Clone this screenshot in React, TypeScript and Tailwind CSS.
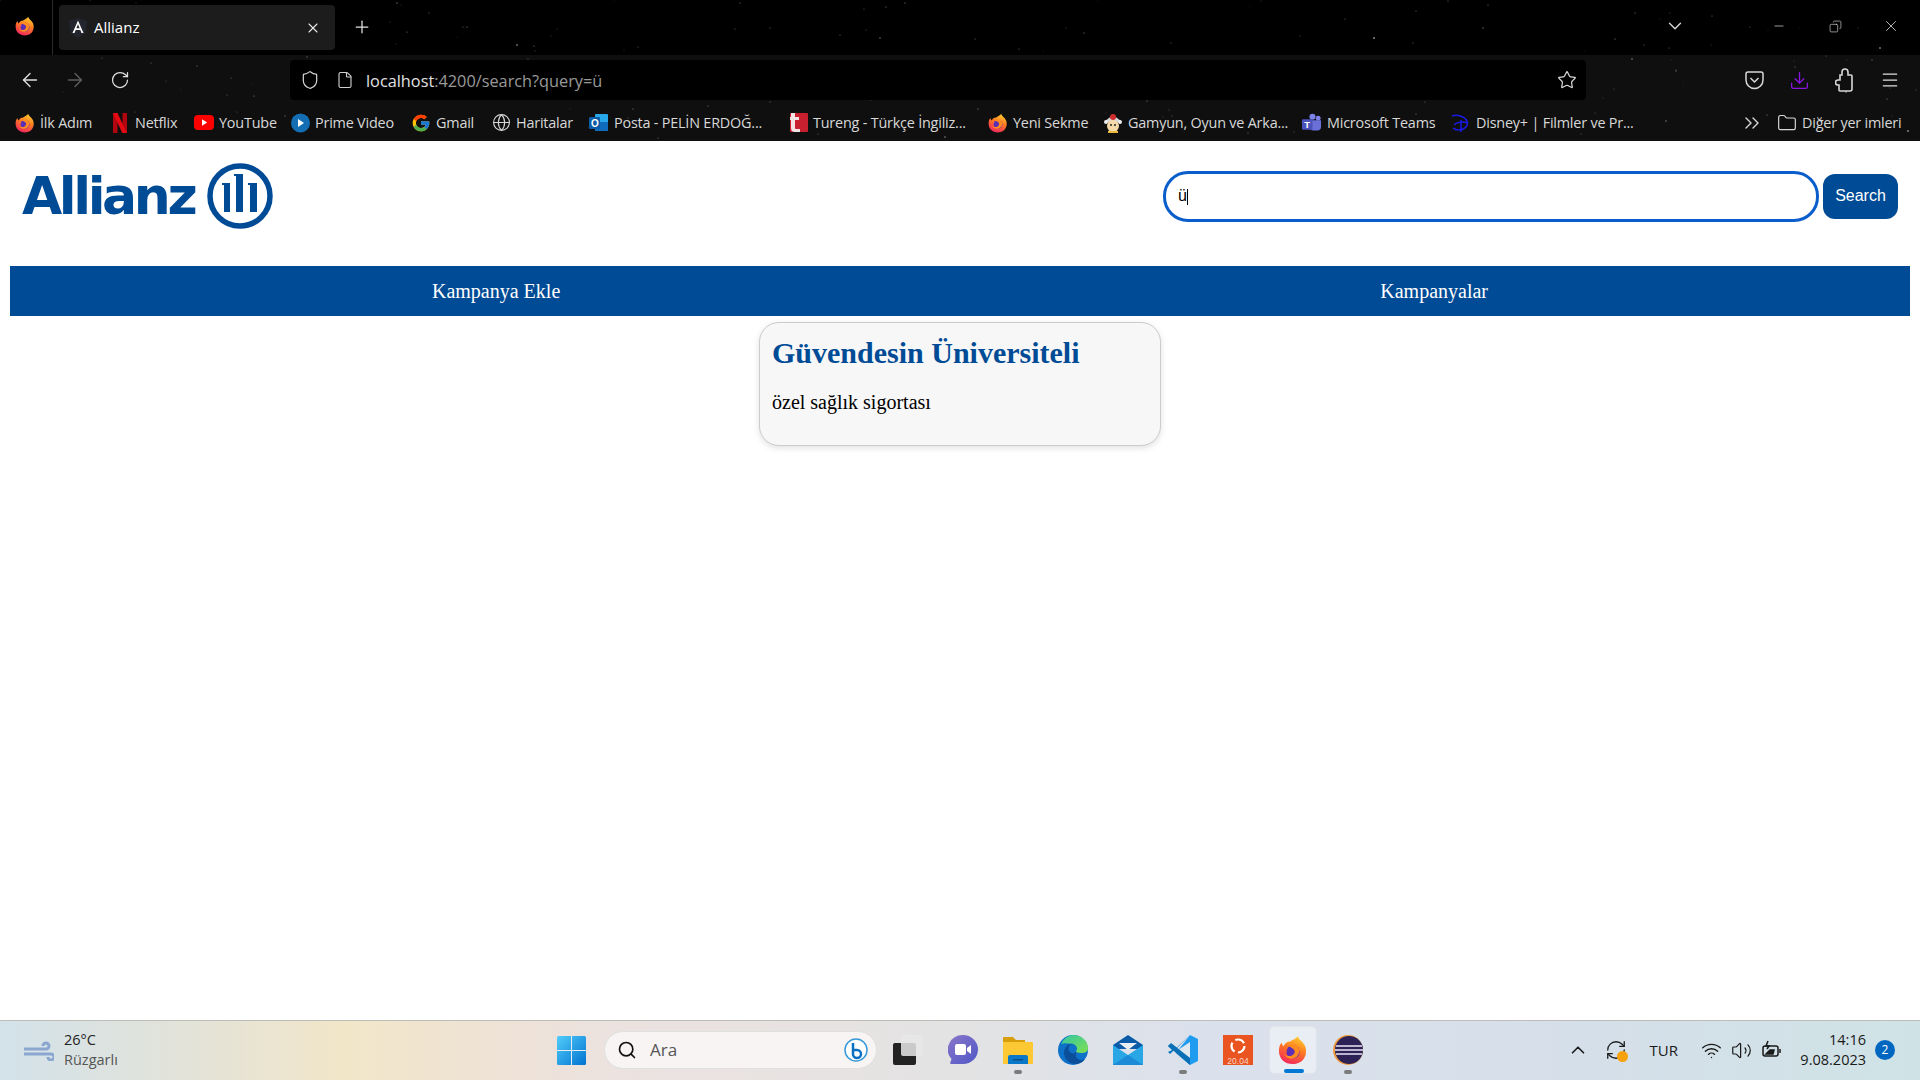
import React from 'react';
import { FcGoogle } from 'react-icons/fc';
import { RotateCw, ArrowLeft, ArrowRight, Shield, File, Star, Download, Menu, ChevronDown, ChevronsRight, ChevronUp, Folder, Globe, Plus, X, Minus, Copy, Search, Wifi, Volume2, RefreshCw } from 'lucide-react';

const sans = "font-['Open_Sans','Noto_Sans',sans-serif]";

const FirefoxIcon = ({ size = 20 }: { size?: number }) => (
    <svg width={size} height={size} viewBox="0 0 32 32">
        <defs>
            <linearGradient id="ffBody" x1="0.7" y1="0" x2="0.3" y2="1">
                <stop offset="0" stopColor="#ffcf2e" />
                <stop offset="0.45" stopColor="#ff7a22" />
                <stop offset="1" stopColor="#f0245f" />
            </linearGradient>
        </defs>
        <path d="M21 1c1 4 6 6 8 11 3 8-1 19-13 19C7 31 1 25 1 17c0-4 1-7 3-9 0 2 1 3 2 4 1-3 4-5 7-5 2-2 7-3 8-6z" fill="url(#ffBody)" />
        <circle cx="16" cy="18" r="7" fill="#5a2fb5" />
        <path d="M11 11c4-2 9-1 11 3 2 5-1 10-6 11-4 1-8-1-10-5 3 3 8 3 10 1 3-2 2-6-1-7-2-1-3-2-4-3z" fill="#ff8a1f" />
    </svg>
);

const Tureng = () => (
    <svg width="19" height="19" viewBox="0 0 19 19">
        <rect x="1" width="18" height="19" rx="1" fill="#c8202f" />
        <path d="M2 0h4v4h4v3H6v8c0 1 1 1 2 1h3v3H6c-2 0-4-1-4-4V7H1V4h1z" fill="#f3e3e5" />
    </svg>
);

const Outlook = () => (
    <svg width="20" height="20" viewBox="0 0 20 20">
        <rect x="6" y="1" width="13" height="17" rx="1" fill="#28a8ea" />
        <rect x="6" y="9" width="13" height="9" fill="#0f6cbd" />
        <rect x="0" y="4" width="11" height="12" rx="1" fill="#0a5ba8" />
        <text x="2" y="14" fontSize="10" fontFamily="Liberation Sans" fontWeight="bold" fill="#fff">O</text>
    </svg>
);

const Teams = () => (
    <svg width="21" height="20" viewBox="0 0 21 20">
        <circle cx="17" cy="5" r="2.6" fill="#7b83eb" />
        <circle cx="11" cy="3.5" r="3.2" fill="#7b83eb" />
        <path d="M8 7h12v7a4 4 0 0 1-4 4h-4a4 4 0 0 1-4-4z" fill="#6a70d8" />
        <rect x="0" y="6" width="11" height="11" rx="1" fill="#4b53bc" />
        <text x="2.3" y="15" fontSize="10" fontFamily="Liberation Sans" fontWeight="bold" fill="#fff">T</text>
    </svg>
);

const Disney = () => (
    <svg width="20" height="20" viewBox="0 0 20 20" fill="none" stroke="#1a1ae8" strokeWidth="1.5">
        <path d="M1 3c6-2 13 1 15 5 2 5-3 9-8 9-3 0-5-1-6-2" />
        <path d="M3 12c3-3 9-4 14-2" />
        <path d="M10 7v12" />
    </svg>
);

const Gamyun = () => (
    <svg width="20" height="20" viewBox="0 0 20 20">
        <path d="M2 8l8-6 8 6-8 3z" fill="#d9d9d9" />
        <circle cx="10" cy="4" r="3" fill="#d02c2c" />
        <circle cx="3" cy="9" r="2" fill="#eee" />
        <circle cx="17" cy="9" r="2" fill="#eee" />
        <circle cx="10" cy="13" r="6" fill="#f6d9a8" />
        <circle cx="8" cy="12" r="1" fill="#222" />
        <circle cx="12" cy="12" r="1" fill="#222" />
        <path d="M5 18h10v2H5z" fill="#e8b93a" />
    </svg>
);

const bookmarks: { label: string; width: number; icon: React.ReactNode }[] = [
    { label: 'İlk Adım', width: 95, icon: <FirefoxIcon /> },
    {
        label: 'Netflix',
        width: 84,
        icon: (
            <svg width="14" height="20" viewBox="0 0 14 20">
                <path d="M0 0h4.5v20L0 20.5z" fill="#b1060f" />
                <path d="M9.5 0H14v20.5L9.5 20z" fill="#b1060f" />
                <path d="M0 0h4.5L14 20.5H9.5z" fill="#e50914" />
            </svg>
        ),
    },
    {
        label: 'YouTube',
        width: 96,
        icon: (
            <svg width="20" height="15" viewBox="0 0 20 15">
                <rect width="20" height="15" rx="4" fill="#f00" />
                <path d="M8 4.2l5.2 3.3L8 10.800z" fill="#fff" />
            </svg>
        ),
    },
    {
        label: 'Prime Video',
        width: 121,
        icon: (
            <svg width="19" height="20" viewBox="0 0 19 20">
                <circle cx="9.500" cy="10" r="9.500" fill="#146eb4" />
                <path d="M7 6l6 4-6 4z" fill="#fff" />
            </svg>
        ),
    },
    { label: 'Gmail', width: 80, icon: <FcGoogle size={20} /> },
    { label: 'Haritalar', width: 98, icon: <Globe size={19} strokeWidth={1.4} className="text-[#d5d5d5]" /> },
    { label: 'Posta - PELİN ERDOĞ...', width: 199, icon: <Outlook /> },
    { label: 'Tureng - Türkçe İngiliz...', width: 200, icon: <Tureng /> },
    { label: 'Yeni Sekme', width: 115, icon: <FirefoxIcon /> },
    { label: 'Gamyun, Oyun ve Arka...', width: 199, icon: <Gamyun /> },
    { label: 'Microsoft Teams', width: 149, icon: <Teams /> },
    { label: 'Disney+ | Filmler ve Pr...', width: 200, icon: <Disney /> },
];

// speckled firefox theme background
const stars = Array.from({ length: 170 }, (_, i) => ({
    x: (i * 733 + ((i * i * 37) % 211)) % 1920,
    y: (i * 89 + ((i * i * 13) % 97)) % 141,
    o: 0.12 + ((i * 17) % 10) / 22,
    r: i % 9 === 0 ? 1 : 0.6,
}));

const AllianzEmblem = () => (
    <svg width="66" height="66" viewBox="0 0 66 66" fill="#004b95">
        <circle cx="33" cy="33" r="30" fill="none" stroke="#004b95" strokeWidth="5.500" />
        <path d="M15 20h8v29h-6V22h-2z" />
        <path d="M27 11h9v38h-7V13h-2z" />
        <path d="M41 20h9v29h-7V22h-2z" />
    </svg>
);

const WindowsLogo = () => (
    <svg width="29" height="29" viewBox="0 0 29 29">
        <defs>
            <linearGradient id="winLogo" x1="0" y1="0" x2="1" y2="1">
                <stop offset="0" stopColor="#52cdfb" />
                <stop offset="1" stopColor="#0072d0" />
            </linearGradient>
        </defs>
        <rect width="29" height="29" rx="1.500" fill="url(#winLogo)" />
        <path d="M14.500 0v29M0 14.500h29" stroke="#e6ecf0" strokeWidth="1" />
    </svg>
);

const TaskView = () => (
    <svg width="30" height="30" viewBox="0 0 30 30">
        <rect x="0" y="8" width="23" height="22" rx="2" fill="#222" />
        <rect x="8" y="0" width="22" height="21" rx="2" fill="#e8e8e8" opacity="0.85" />
    </svg>
);

const ChatIcon = () => (
    <svg width="30" height="30" viewBox="0 0 30 30">
        <defs>
            <linearGradient id="chatG" x1="0" y1="0" x2="1" y2="1">
                <stop offset="0" stopColor="#8a76c9" />
                <stop offset="1" stopColor="#4f58c7" />
            </linearGradient>
        </defs>
        <path d="M15 0a15 14.500 0 0 1 0 29H3c-1 0-1-1-.5-2l1-3A15 14.500 0 0 1 15 0z" fill="url(#chatG)" />
        <rect x="7" y="9" width="11" height="11" rx="2" fill="#fff" />
        <path d="M19 13l4-3v9l-4-3z" fill="#fff" />
    </svg>
);

const FolderIcon = () => (
    <svg width="30" height="30" viewBox="0 0 30 30">
        <path d="M0 3a1 1 0 0 1 1-1h9l3 3h9v4H0z" fill="#d99e0b" />
        <path d="M0 7h29a1 1 0 0 1 1 1v20a1 1 0 0 1-1 1H1a1 1 0 0 1-1-1z" fill="#fcc934" />
        <path d="M5 22a2 2 0 0 1 2-2h16a2 2 0 0 1 2 2v7H5z" fill="#0a78c9" />
        <rect x="10" y="24" width="10" height="1.500" fill="#0b4f8a" />
    </svg>
);

const EdgeIcon = () => (
    <svg width="30" height="30" viewBox="0 0 30 30">
        <defs>
            <linearGradient id="edgeG" x1="0" y1="0" x2="1" y2="1">
                <stop offset="0" stopColor="#33c6a5" />
                <stop offset="1" stopColor="#7fe04f" />
            </linearGradient>
        </defs>
        <circle cx="15" cy="15" r="15" fill="#0f72c9" />
        <path d="M3 9C6 3 11 0 15 0c9 0 15 6 15 13 0 4-3 5-7 5-3 0-5-1-5-2 2-2 1-6-3-7C10 8 5 8 3 9z" fill="url(#edgeG)" />
        <path d="M18 16c0 3-4 3-6 1-3-3-1-8 3-8-4-1-9 3-9 9 0 6 6 12 13 11 4-1 7-3 8-5-3 2-7 1-9-2z" fill="#0b4f9a" />
    </svg>
);

const MailIcon = () => (
    <svg width="30" height="30" viewBox="0 0 30 30">
        <path d="M0 10L15 0l15 10v4H0z" fill="#0a5aa8" />
        <path d="M6 8h18l-9 7z" fill="#e8eef4" />
        <path d="M0 10l15 10 15-10v20H0z" fill="#29a6e6" />
        <path d="M0 30l15-10 15 10z" fill="#1c8ad6" />
    </svg>
);

const VsCode = () => (
    <svg width="30" height="30" viewBox="0 0 30 30">
        <path d="M22 0l8 4v22l-8 4-14-12z" fill="#1f9cf0" />
        <path d="M22 7v16L10 15z" fill="#e1e7ef" />
        <path d="M22 0L2 19l-2-2 4-2-4-4 3-2 6 4z" fill="#0a78c4" />
        <path d="M3 8l19 15v7L0 11z" fill="#0a6fb5" />
    </svg>
);

const UbuntuIcon = () => (
    <svg width="30" height="30" viewBox="0 0 30 30">
        <rect width="30" height="30" fill="#e95420" />
        <circle cx="15" cy="11" r="6.500" fill="none" stroke="#fff" strokeWidth="2.200" strokeDasharray="10 3.500" />
        <text x="15" y="28.500" textAnchor="middle" fontSize="8.500" fontFamily="Liberation Sans" fill="#f7d7cb">20.04</text>
    </svg>
);

const EclipseIcon = () => (
    <svg width="30" height="30" viewBox="0 0 30 30">
        <circle cx="15" cy="15" r="15" fill="#f09a3e" />
        <circle cx="16" cy="15" r="14" fill="#2c2255" />
        <path d="M3 11h26M2 15h28M3 19h26" stroke="#e9e5f4" strokeWidth="1.600" />
    </svg>
);

const taskbarItems: { id: string; icon: React.ReactNode; dot?: boolean; active?: boolean }[] = [
    { id: 'taskview', icon: <TaskView /> },
    { id: 'chat', icon: <ChatIcon /> },
    { id: 'files', icon: <FolderIcon />, dot: true },
    { id: 'edge', icon: <EdgeIcon /> },
    { id: 'mail', icon: <MailIcon /> },
    { id: 'vscode', icon: <VsCode />, dot: true },
    { id: 'ubuntu', icon: <UbuntuIcon /> },
    { id: 'firefox', icon: <FirefoxIcon size={30} />, active: true },
    { id: 'eclipse', icon: <EclipseIcon />, dot: true },
];

const App: React.FC = () => {
    return (
        <div className="w-[1920px] h-[1080px] flex flex-col overflow-hidden bg-white">
            {/* Browser chrome */}
            <div className={`relative shrink-0 bg-black ${sans}`}>
                <svg className="absolute inset-0 pointer-events-none" width="1920" height="141">
                    <rect y="55" width="1920" height="86" fill="#0f0f0f" />
                    {stars.map((s, i) => (
                        <circle key={i} cx={s.x} cy={s.y} r={s.r} fill="#fff" opacity={s.o} />
                    ))}
                </svg>

                {/* Tab strip */}
                <div className="relative h-[55px] flex items-start text-[#e4e4e4]">
                    <div className="w-[53px] h-[55px] flex items-center justify-center border-r border-[#2a2a2a] pb-[4px] pr-[3px]">
                        <FirefoxIcon />
                    </div>
                    <div className="ml-[6px] mt-[5px] w-[276px] h-[45px] bg-[#1c1c1c] rounded-[4px] flex items-center pl-[10px] pr-[14px]">
                        <svg width="18" height="20" viewBox="0 0 18 20">
                            <path d="M9 0L0 3l1.500 12L9 20l7.500-5L18 3z" fill="#23262e" />
                            <path d="M9 2.500L3.500 15h2L6.700 12h4.600l1.200 3h2zM7.400 10.300L9 6.300l1.600 4z" fill="#fff" />
                        </svg>
                        <span className="ml-[7px] text-[15px] text-white flex-1">Allianz</span>
                        <X size={16} strokeWidth={1.6} className="text-[#e8e8e8]" />
                    </div>
                    <div className="ml-[17px] mt-[17px]">
                        <Plus size={20} strokeWidth={1.5} />
                    </div>
                    <div className="ml-auto flex items-center h-[52px] text-[#d8d8d8]">
                        <ChevronDown size={22} strokeWidth={1.5} />
                        <Minus size={14} strokeWidth={1.2} className="ml-[86px]" />
                        <Copy size={13} strokeWidth={1.2} className="ml-[43px] -scale-x-100" />
                        <X size={18} strokeWidth={1.1} className="ml-[40px] mr-[20px]" />
                    </div>
                </div>

                {/* Nav toolbar */}
                <div className="relative h-[45px] flex items-start text-[#e0e0e0]">
                    <div className="w-[290px] h-[50px] flex items-center pl-[19px]">
                        <ArrowLeft size={22} strokeWidth={1.5} />
                        <ArrowRight size={22} strokeWidth={1.5} className="ml-[23px] text-[#5f5f5f]" />
                        <RotateCw size={20} strokeWidth={1.5} className="ml-[24px]" />
                    </div>
                    <div className="mt-[5px] w-[1296px] h-[40px] bg-black rounded-[4px] flex items-center pl-[10px] pr-[9px]">
                        <Shield size={20} strokeWidth={1.5} className="text-[#d0d0d0]" />
                        <File size={18} strokeWidth={1.5} className="ml-[16px] text-[#d0d0d0]" />
                        <span className="ml-[12px] mt-[3px] text-[16.3px] text-[#e2e2e2]">
                            localhost<span className="text-[#9a9a9a]">:4200/search?query=ü</span>
                        </span>
                        <Star size={20} strokeWidth={1.5} className="ml-auto text-[#d8d8d8]" />
                    </div>
                    <div className="flex items-center h-[50px] pl-[159px]">
                        <svg width="19" height="20" viewBox="0 0 19 20" fill="none" stroke="#d8d8d8" strokeWidth="1.500">
                            <path d="M1 4a2 2 0 0 1 2-2h13a2 2 0 0 1 2 2v6a8.500 8.500 0 0 1-17 0z" />
                            <path d="M5.500 8l4 4 4-4" />
                        </svg>
                        <Download size={21} strokeWidth={1.5} className="ml-[25px] text-[#8a14e0]" />
                        <svg className="ml-[25px]" width="18" height="24" viewBox="0 0 18 24" fill="none" stroke="#d8d8d8" strokeWidth="1.600">
                            <path d="M5 23h10a2 2 0 0 0 2-2V8a1 1 0 0 0-1-1h-3V4a3 3 0 0 0-6 0v3H5v5H3a2.500 2.500 0 0 0 0 5h1v5a1 1 0 0 0 1 1z" />
                        </svg>
                        <Menu size={20} strokeWidth={1.5} className="ml-[27px]" />
                    </div>
                </div>

                {/* Bookmarks bar */}
                <div className="relative h-[41px] flex items-center pl-[15px] text-[14.4px] text-[#d8d8d8] pt-[5px]">
                    {bookmarks.map((b) => (
                        <div key={b.label} style={{ width: b.width }} className="flex items-center gap-[5px] shrink-0 whitespace-nowrap tracking-[-0.2px]">
                            <div className="w-[20px] flex justify-center shrink-0">{b.icon}</div>
                            <span>{b.label}</span>
                        </div>
                    ))}
                    <ChevronsRight size={24} strokeWidth={1.4} className="ml-[89px]" />
                    <Folder size={20} strokeWidth={1.4} className="ml-[13px]" />
                    <span className="ml-[5px] whitespace-nowrap tracking-[-0.2px]">Diğer yer imleri</span>
                </div>
            </div>

            {/* Page */}
            <div className="flex-1 px-[10px] font-['Liberation_Serif',serif]">
                <header className="h-[125px] flex items-center justify-between pb-[15px] pr-[12px]">
                    <div className="flex items-center pl-[12px]">
                        <span className="font-['DejaVu_Sans',sans-serif] font-bold text-[52px] leading-none text-[#004b95] tracking-[-3.400px]">Allianz</span>
                        <div className="ml-[13px]">
                            <AllianzEmblem />
                        </div>
                    </div>
                    <div className="flex items-center gap-[4px]">
                        <div className="relative">
                            <input
                                readOnly
                                value="ü"
                                className="w-[656px] h-[51px] rounded-[25px] border-[3px] border-[#0a5ecb] pl-[12px] outline-none text-[16px] text-black font-['Liberation_Sans',sans-serif]"
                            />
                            <div className="absolute left-[24px] top-[18px] w-px h-[16px] bg-black" />
                        </div>
                        <button className="w-[75px] h-[45px] rounded-[12px] bg-[#004b95] text-white text-[16px] font-['Liberation_Sans',sans-serif]">Search</button>
                    </div>
                </header>

                <nav className="h-[50px] bg-[#004b95] flex items-center justify-around px-3 pb-[1px] text-[20px] text-white">
                    <a>Kampanya Ekle</a>
                    <a>Kampanyalar</a>
                </nav>

                <div className="mt-[6px] mx-auto w-[402px] h-[124px] bg-[#f7f7f7] border border-[#cccccc] rounded-[20px] shadow-[0_2px_6px_rgba(0,0,0,0.12)] px-[12px] pt-[13px]">
                    <h2 className="font-bold text-[30px] leading-[34px] text-[#004b95]">Güvendesin Üniversiteli</h2>
                    <p className="mt-[21px] text-[20px] leading-[23px] text-black">özel sağlık sigortası</p>
                </div>
            </div>

            {/* Windows taskbar */}
            <div className={`shrink-0 h-[60px] border-t border-[#bdbdb8] flex items-center pb-[1px] bg-[linear-gradient(90deg,#d3e2ea_0%,#e5e3d6_11%,#f2e6c9_18%,#eee2d8_27%,#ebe2e0_33%,#e3e3e3_50%,#dbe1ec_62%,#d5dfe9_83%,#cfe3e6_100%)] ${sans}`}>
                <div className="w-[557px] flex items-center pl-[24px]">
                    <svg width="30" height="22" viewBox="0 0 30 22">
                        <path d="M0 10h22a3 3 0 1 0-3-3M0 15h27a3 3 0 1 1-3 3" fill="none" stroke="#8ba6cf" strokeWidth="3" />
                    </svg>
                    <div className="ml-[10px] text-[14.5px] leading-[20px] text-[#222]">
                        <div>26°C</div>
                        <div className="text-[#555]">Rüzgarlı</div>
                    </div>
                </div>
                <WindowsLogo />
                <div className="ml-[18px] w-[273px] h-[38px] rounded-full bg-[#f7f4f3] border border-[#e0e0e0] flex items-center pl-[12px] pr-[8px] text-[17px] text-[#555]">
                    <Search size={20} strokeWidth={2} className="text-[#111]" />
                    <span className="ml-[13px] flex-1">Ara</span>
                    <svg width="24" height="24" viewBox="0 0 24 24">
                        <circle cx="12" cy="12" r="11" fill="#fff" stroke="#3a9ad9" strokeWidth="1.500" />
                        <path d="M9 5v11a4 4 0 1 0 4-4H9" fill="none" stroke="#0b6fc2" strokeWidth="2.500" />
                    </svg>
                </div>
                <div className="ml-[7px] flex items-center">
                    {taskbarItems.map((t) => (
                        <div
                            key={t.id}
                            className={`relative w-[48px] h-[48px] mr-[7px] rounded-[5px] flex items-center justify-center ${t.active ? 'bg-[#e9edf4] border border-[#dfe3ea]' : ''}`}
                        >
                            {t.icon}
                            {t.dot && <div className="absolute bottom-0 left-[20px] w-[8px] h-[4px] rounded-full bg-[#7b7b7b]" />}
                            {t.active && <div className="absolute bottom-0 left-[14px] w-[20px] h-[4px] rounded-full bg-[#0078d4]" />}
                        </div>
                    ))}
                </div>
                <div className="ml-auto flex items-center text-[#1a1a1a] pr-[25px]">
                    <ChevronUp size={22} strokeWidth={1.8} />
                    <div className="relative ml-[16px]">
                        <RefreshCw size={22} strokeWidth={1.4} />
                        <div className="absolute -right-[1px] -bottom-[1px] w-[11px] h-[11px] rounded-full bg-[#f7a10d]" />
                    </div>
                    <span className="ml-[23px] text-[15px]">TUR</span>
                    <Wifi size={21} strokeWidth={1.6} className="ml-[23px]" />
                    <Volume2 size={21} strokeWidth={1.4} className="ml-[9px]" />
                    <svg className="ml-[10px]" width="20" height="20" viewBox="0 0 20 20" fill="none" stroke="#1a1a1a" strokeWidth="1.500">
                        <rect x="1" y="6" width="15" height="10" rx="2" />
                        <path d="M18 9v4" />
                        <path d="M4 14l4-4h4l-1 4z" fill="#1a1a1a" />
                        <path d="M6 1L4 6h3L5 9" />
                    </svg>
                    <div className="ml-[10px] text-right text-[14.5px] leading-[20px] w-[74px]">
                        <div>14:16</div>
                        <div>9.08.2023</div>
                    </div>
                    <div className="ml-[9px] w-[20px] h-[20px] rounded-full bg-[#0067c0] text-white text-[12px] flex items-center justify-center">2</div>
                </div>
            </div>
        </div>
    );
};

export default App;
